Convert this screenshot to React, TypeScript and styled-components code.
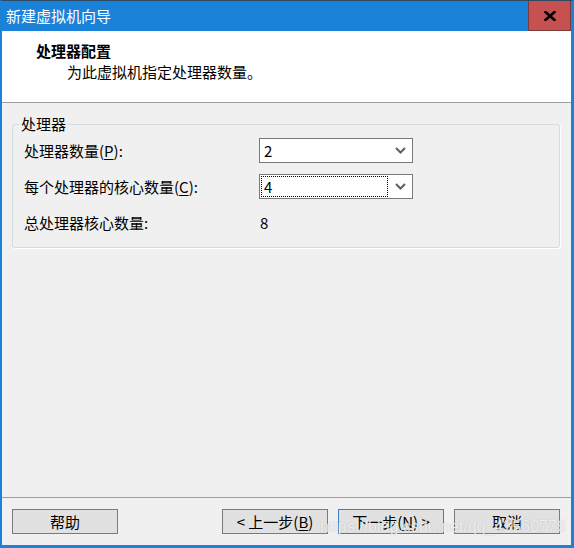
import React from 'react';
import styled, { createGlobalStyle } from 'styled-components';

const GlobalStyle = createGlobalStyle`
	html, body {
		margin: 0;
		padding: 0;
		background: #f0f0f0;
	}
	body {
		font-family: "Noto Sans CJK SC", "Noto Sans", sans-serif;
		font-size: 15px;
		color: #000;
	}
`;

const Window = styled.div`
	position: relative;
	width: 574px;
	height: 548px;
	box-sizing: border-box;
	display: flex;
	flex-direction: column;
	border-top: 1px solid #2e4a63;
	border-left: 2px solid #1a82d9;
	border-right: 3px solid #1a82d9;
	border-bottom: 3px solid #1a82d9;
	background: #f0f0f0;
	overflow: hidden;
`;

const TitleBar = styled.div`
	height: 30px;
	flex: none;
	display: flex;
	align-items: center;
	background: #1a82d9;
	color: #fff;
	padding-left: 4px;
	font-size: 15px;
	line-height: 30px;
`;

const TitleText = styled.span`
	flex: 1;
`;

const CloseButton = styled.div`
	width: 43px;
	height: 30px;
	box-sizing: border-box;
	display: flex;
	align-items: center;
	justify-content: center;
	background: #c75050;
	border: 1px solid #7a3b3b;
	border-top: none;
`;

const Header = styled.div`
	height: 72px;
	flex: none;
	box-sizing: border-box;
	background: #fff;
	border-bottom: 1px solid #a0a0a0;
	padding: 10px 0 0 34px;
`;

const HeaderTitle = styled.div`
	font-weight: 700;
	line-height: 20px;
`;

const HeaderSub = styled.div`
	margin-top: 1px;
	padding-left: 31px;
	line-height: 20px;
`;

const Body = styled.div`
	flex: 1;
	padding: 11px 11px 0 10px;
`;

const GroupBox = styled.fieldset`
	margin: 0;
	padding: 4px 11px 12px 11px;
	border: 1px solid #d5dce2;
	border-radius: 3px;
	box-shadow: 1px 1px 0 #fff;
`;

const GroupLegend = styled.legend`
	padding: 0 2px;
	margin-left: -5px;
	line-height: 20px;
`;

const FormGrid = styled.div`
	display: grid;
	grid-template-columns: 235px 154px;
	grid-auto-rows: 25px;
	row-gap: 11px;
	align-items: center;
`;

const Label = styled.div`
	line-height: 20px;
	white-space: nowrap;
`;

const Value = styled.div`
	line-height: 20px;
	padding-left: 1px;
`;

const U = styled.span`
	text-decoration: underline;
	text-underline-offset: 2px;
`;

const Combo = styled.div`
	height: 25px;
	box-sizing: border-box;
	display: flex;
	align-items: stretch;
	background: #fff;
	border: 1px solid #7a7a7a;
`;

const ComboValue = styled.div<{ $focused?: boolean }>`
	flex: 1;
	margin: 1px;
	padding-left: 2px;
	border: 1px dotted ${p => (p.$focused ? '#000' : 'transparent')};
	line-height: 19px;
`;

const ComboArrow = styled.div`
	width: 22px;
	display: flex;
	align-items: center;
	justify-content: center;
	padding-right: 1px;
`;

const Footer = styled.div`
	flex: none;
	display: flex;
	gap: 10px;
	border-top: 1px solid #a0a0a0;
	padding: 11px 11px 11px 10px;
`;

const Spacer = styled.div`
	flex: 1;
`;

const Button = styled.div<{ $default?: boolean }>`
	width: 106px;
	height: 25px;
	box-sizing: border-box;
	display: flex;
	align-items: center;
	justify-content: center;
	background: #e1e1e1;
	border: 1px solid ${p => (p.$default ? '#3d7fc0' : '#7a7a7a')};
	line-height: 20px;
	white-space: nowrap;
`;

const Watermark = styled.div`
	position: absolute;
	left: 318px;
	top: 517px;
	font-family: "Liberation Sans", Arial, sans-serif;
	font-size: 16px;
	line-height: 18px;
	color: rgba(255, 255, 255, 0.78);
	text-shadow: 0 0 1px rgba(120, 120, 120, 0.5);
	pointer-events: none;
	white-space: nowrap;
`;

const Chevron = () => (
	<svg width="11" height="7" viewBox="0 0 11 7">
		<polyline points="1,1 5.5,5.5 10,1" fill="none" stroke="#606060" strokeWidth="2" />
	</svg>
);

const CloseIcon = () => (
	<svg width="12" height="10" viewBox="0 0 12 10">
		<path d="M1.5 1 L10.5 9 M10.5 1 L1.5 9" stroke="#000" strokeWidth="2.6" strokeLinecap="square" />
	</svg>
);

const ComboBox = ({ value, focused }: { value: string; focused?: boolean }) => (
	<Combo>
		<ComboValue $focused={focused}>{value}</ComboValue>
		<ComboArrow>
			<Chevron />
		</ComboArrow>
	</Combo>
);

const App = () => {
	return (
		<>
			<GlobalStyle />
			<Window>
				<TitleBar>
					<TitleText>新建虚拟机向导</TitleText>
					<CloseButton>
						<CloseIcon />
					</CloseButton>
				</TitleBar>
				<Header>
					<HeaderTitle>处理器配置</HeaderTitle>
					<HeaderSub>为此虚拟机指定处理器数量。</HeaderSub>
				</Header>
				<Body>
					<GroupBox>
						<GroupLegend>处理器</GroupLegend>
						<FormGrid>
							<Label>处理器数量(<U>P</U>):</Label>
							<ComboBox value="2" />
							<Label>每个处理器的核心数量(<U>C</U>):</Label>
							<ComboBox value="4" focused />
							<Label>总处理器核心数量:</Label>
							<Value>8</Value>
						</FormGrid>
					</GroupBox>
				</Body>
				<Footer>
					<Button>帮助</Button>
					<Spacer />
					<Button>&lt; 上一步(<U>B</U>)</Button>
					<Button $default>下一步(<U>N</U>) &gt;</Button>
					<Button>取消</Button>
				</Footer>
				<Watermark>https://blog.csdn.net/qq_43560776</Watermark>
			</Window>
		</>
	);
};

export default App;
